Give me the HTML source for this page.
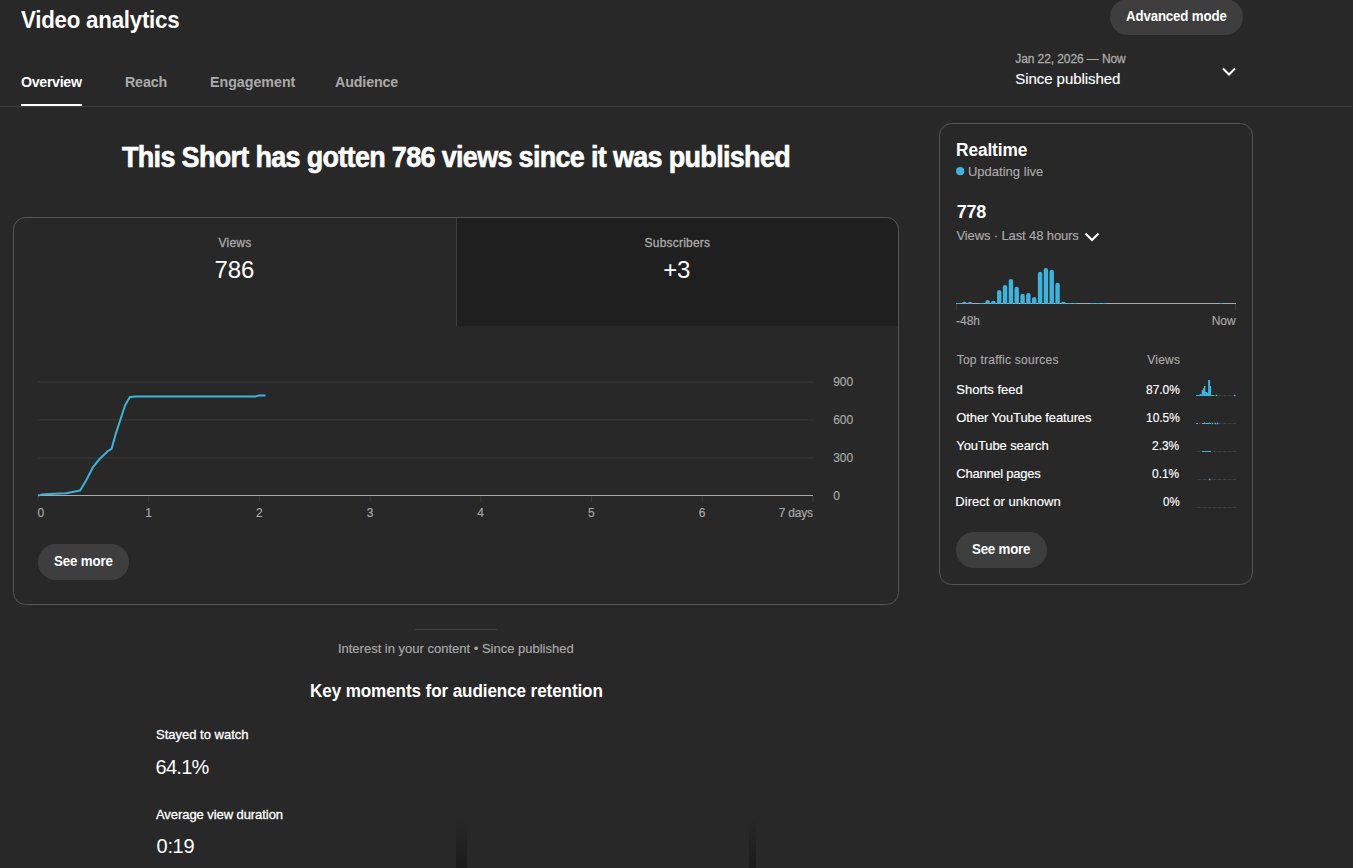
<!DOCTYPE html>
<html><head><meta charset="utf-8"><style>
html,body{margin:0;padding:0;background:#282828;width:1353px;height:868px;overflow:hidden;position:relative;font-family:"Liberation Sans",sans-serif;}
.t{position:absolute;white-space:nowrap;}
.abs{position:absolute;}
.btn{position:absolute;background:#3e3e3e;border-radius:18px;}
</style></head><body>
<div class="btn" style="left:1110px;top:-1px;width:133px;height:36px;"></div>
<div class="abs" style="left:21px;top:104px;width:61px;height:2px;background:#fff;"></div>
<div class="abs" style="left:0;top:106px;width:1353px;height:1px;background:#3e3e3e;"></div>
<svg class="abs" style="left:0;top:0" width="1353" height="868" viewBox="0 0 1353 868">
  <path d="M1223 68.5 L1229 74.5 L1235 68.5" fill="none" stroke="#fff" stroke-width="2"/>
  <path d="M457 218 H886 A12 12 0 0 1 898 230 V326 H457 Z" fill="#1f1f1f"/>
  <rect x="13.5" y="217.5" width="885" height="387" rx="12" fill="none" stroke="#555555" stroke-width="1"/>
  <rect x="456" y="218" width="1" height="108" fill="#3f3f3f"/>
  <rect x="38" y="381.4" width="775" height="1" fill="#3a3a3a"/>
  <rect x="38" y="419.4" width="775" height="1" fill="#3a3a3a"/>
  <rect x="38" y="457.4" width="775" height="1" fill="#3a3a3a"/>
  <rect x="37.50" y="496" width="1" height="6" fill="#3a3a3a"/><rect x="148.21" y="496" width="1" height="6" fill="#3a3a3a"/><rect x="258.93" y="496" width="1" height="6" fill="#3a3a3a"/><rect x="369.64" y="496" width="1" height="6" fill="#3a3a3a"/><rect x="480.36" y="496" width="1" height="6" fill="#3a3a3a"/><rect x="591.07" y="496" width="1" height="6" fill="#3a3a3a"/><rect x="701.78" y="496" width="1" height="6" fill="#3a3a3a"/><rect x="812.50" y="496" width="1" height="6" fill="#3a3a3a"/>
  <rect x="38" y="495" width="775" height="1" fill="#aaaaaa"/>
  <path d="M38,495.6 L42.1,494.4 L54.2,493.7 L66.3,493.3 L80.1,490.5 L86.1,480.5 L93.2,466.8 L99.6,459 L107.7,451.2 L111.6,448.8 L115.6,434.4 L125,405.5 L129.7,397.3 L134.8,396.4 L255.8,396.4 L259.3,395.4 L265.5,395.4" fill="none" stroke="#3fb3dc" stroke-width="2" stroke-linejoin="round"/>
  <rect x="939.5" y="123.5" width="313" height="461" rx="12" fill="#282828" stroke="#555555" stroke-width="1"/>
  <circle cx="960.2" cy="171.2" r="4.1" fill="#3fb3dc"/>
  <path d="M1085.5 233.5 L1092 240 L1098.5 233.5" fill="none" stroke="#fff" stroke-width="2"/>
  <rect x="956" y="303" width="280" height="1" fill="#aaaaaa"/>
  <rect x="956" y="304" width="1" height="6" fill="#3a3a3a"/>
  <rect x="1235" y="304" width="1" height="6" fill="#3a3a3a"/>
  <rect x="956.20" y="303" width="4.4" height="1" fill="#3fb3dc"/><path d="M962.03 304 V302.90 A2.2 1.10 0 0 1 966.43 302.90 V304 Z" fill="#3fb3dc"/><path d="M967.87 304 V303.00 A2.2 1.00 0 0 1 972.27 303.00 V304 Z" fill="#3fb3dc"/><rect x="979.53" y="303" width="4.4" height="1" fill="#3fb3dc"/><path d="M985.37 304 V301.95 A2.2 2.05 0 0 1 989.77 301.95 V304 Z" fill="#3fb3dc"/><path d="M991.20 304 V302.40 A2.2 1.60 0 0 1 995.60 302.40 V304 Z" fill="#3fb3dc"/><path d="M997.03 304 V292.20 A2.2 2.20 0 0 1 1001.43 292.20 V304 Z" fill="#3fb3dc"/><path d="M1002.87 304 V287.10 A2.2 2.20 0 0 1 1007.27 287.10 V304 Z" fill="#3fb3dc"/><path d="M1008.70 304 V281.10 A2.2 2.20 0 0 1 1013.10 281.10 V304 Z" fill="#3fb3dc"/><path d="M1014.53 304 V289.00 A2.2 2.20 0 0 1 1018.93 289.00 V304 Z" fill="#3fb3dc"/><path d="M1020.37 304 V296.00 A2.2 2.20 0 0 1 1024.77 296.00 V304 Z" fill="#3fb3dc"/><path d="M1026.20 304 V295.10 A2.2 2.20 0 0 1 1030.60 295.10 V304 Z" fill="#3fb3dc"/><path d="M1032.03 304 V299.10 A2.2 2.20 0 0 1 1036.43 299.10 V304 Z" fill="#3fb3dc"/><path d="M1037.87 304 V274.00 A2.2 2.20 0 0 1 1042.27 274.00 V304 Z" fill="#3fb3dc"/><path d="M1043.70 304 V270.20 A2.2 2.20 0 0 1 1048.10 270.20 V304 Z" fill="#3fb3dc"/><path d="M1049.53 304 V272.00 A2.2 2.20 0 0 1 1053.93 272.00 V304 Z" fill="#3fb3dc"/><path d="M1055.37 304 V285.00 A2.2 2.20 0 0 1 1059.77 285.00 V304 Z" fill="#3fb3dc"/><path d="M1061.20 304 V302.90 A2.2 1.10 0 0 1 1065.60 302.90 V304 Z" fill="#3fb3dc"/><rect x="1067.03" y="303" width="4.4" height="1" fill="#3fb3dc"/><rect x="1072.87" y="303" width="4.4" height="1" fill="#3fb3dc"/><rect x="1090.37" y="303" width="4.4" height="1" fill="#3fb3dc"/><rect x="1096.20" y="303" width="4.4" height="1" fill="#3fb3dc"/><rect x="1102.03" y="303" width="4.4" height="1" fill="#3fb3dc"/><rect x="1218.70" y="303" width="4.4" height="1" fill="#3fb3dc"/>
  <rect x="1196" y="395" width="40" height="1" fill="#333333"/><rect x="1198.8" y="395" width="1.5" height="1" fill="#4a4a4a"/><rect x="1203.8" y="395" width="1.5" height="1" fill="#4a4a4a"/><rect x="1208.8" y="395" width="1.5" height="1" fill="#4a4a4a"/><rect x="1213.8" y="395" width="1.5" height="1" fill="#4a4a4a"/><rect x="1218.8" y="395" width="1.5" height="1" fill="#4a4a4a"/><rect x="1223.8" y="395" width="1.5" height="1" fill="#4a4a4a"/><rect x="1228.8" y="395" width="1.5" height="1" fill="#4a4a4a"/><rect x="1233.8" y="395" width="1.5" height="1" fill="#4a4a4a"/><rect x="1196" y="395" width="18.200000000000045" height="1" fill="#3fb3dc"/><rect x="1215.8" y="394.7" width="1.5" height="1.5" fill="#3fb3dc"/><rect x="1233.8999999999999" y="394.7" width="1.5" height="1.5" fill="#3fb3dc"/><polygon points="1196,396 1199.7,396 1199.7,394 1201.3,394 1201.3,396 1201.6,396 1201.6,390.3 1202.9,390.3 1202.9,388.3 1204,388.3 1204,386 1205.4,386 1205.4,392 1207.2,392 1207.2,393.1 1208.1,393.1 1208.1,380 1210.1,380 1210.1,386 1211.1,386 1211.1,396" fill="#3fb3dc"/><rect x="1196" y="423" width="40" height="1" fill="#333333"/><rect x="1198.8" y="423" width="1.5" height="1" fill="#4a4a4a"/><rect x="1203.8" y="423" width="1.5" height="1" fill="#4a4a4a"/><rect x="1208.8" y="423" width="1.5" height="1" fill="#4a4a4a"/><rect x="1213.8" y="423" width="1.5" height="1" fill="#4a4a4a"/><rect x="1218.8" y="423" width="1.5" height="1" fill="#4a4a4a"/><rect x="1223.8" y="423" width="1.5" height="1" fill="#4a4a4a"/><rect x="1228.8" y="423" width="1.5" height="1" fill="#4a4a4a"/><rect x="1233.8" y="423" width="1.5" height="1" fill="#4a4a4a"/><rect x="1196" y="423" width="2" height="1" fill="#3fb3dc"/><rect x="1202" y="423" width="9" height="1" fill="#3fb3dc"/><rect x="1211.8" y="422.7" width="1.5" height="1.5" fill="#3fb3dc"/><rect x="1214.8" y="422.7" width="1.5" height="1.5" fill="#3fb3dc"/><rect x="1216.8" y="422.7" width="1.5" height="1.5" fill="#3fb3dc"/><polygon points="1203.8,423 1204.4,421.8 1205,423 1208.8,423 1209.4,421.8 1210,423" fill="#3fb3dc"/><rect x="1196" y="451" width="40" height="1" fill="#333333"/><rect x="1198.8" y="451" width="1.5" height="1" fill="#4a4a4a"/><rect x="1203.8" y="451" width="1.5" height="1" fill="#4a4a4a"/><rect x="1208.8" y="451" width="1.5" height="1" fill="#4a4a4a"/><rect x="1213.8" y="451" width="1.5" height="1" fill="#4a4a4a"/><rect x="1218.8" y="451" width="1.5" height="1" fill="#4a4a4a"/><rect x="1223.8" y="451" width="1.5" height="1" fill="#4a4a4a"/><rect x="1228.8" y="451" width="1.5" height="1" fill="#4a4a4a"/><rect x="1233.8" y="451" width="1.5" height="1" fill="#4a4a4a"/><rect x="1202" y="451" width="9" height="1" fill="#3fb3dc"/><rect x="1196" y="479" width="40" height="1" fill="#333333"/><rect x="1198.8" y="479" width="1.5" height="1" fill="#4a4a4a"/><rect x="1203.8" y="479" width="1.5" height="1" fill="#4a4a4a"/><rect x="1208.8" y="479" width="1.5" height="1" fill="#4a4a4a"/><rect x="1213.8" y="479" width="1.5" height="1" fill="#4a4a4a"/><rect x="1218.8" y="479" width="1.5" height="1" fill="#4a4a4a"/><rect x="1223.8" y="479" width="1.5" height="1" fill="#4a4a4a"/><rect x="1228.8" y="479" width="1.5" height="1" fill="#4a4a4a"/><rect x="1233.8" y="479" width="1.5" height="1" fill="#4a4a4a"/><rect x="1208.8999999999999" y="478.7" width="1.5" height="1.5" fill="#3fb3dc"/><rect x="1196" y="507" width="40" height="1" fill="#333333"/><rect x="1198.8" y="507" width="1.5" height="1" fill="#4a4a4a"/><rect x="1203.8" y="507" width="1.5" height="1" fill="#4a4a4a"/><rect x="1208.8" y="507" width="1.5" height="1" fill="#4a4a4a"/><rect x="1213.8" y="507" width="1.5" height="1" fill="#4a4a4a"/><rect x="1218.8" y="507" width="1.5" height="1" fill="#4a4a4a"/><rect x="1223.8" y="507" width="1.5" height="1" fill="#4a4a4a"/><rect x="1228.8" y="507" width="1.5" height="1" fill="#4a4a4a"/><rect x="1233.8" y="507" width="1.5" height="1" fill="#4a4a4a"/>
  <rect x="415" y="629" width="82" height="1" fill="#3f3f3f"/>
  <defs><linearGradient id="g1" x1="0" y1="0" x2="0" y2="1"><stop offset="0" stop-color="#282828"/><stop offset="1" stop-color="#1b1b1b"/></linearGradient></defs>
  <rect x="456" y="816" width="11" height="52" fill="url(#g1)"/>
  <rect x="749" y="816" width="7" height="52" fill="url(#g1)"/>
</svg>
<div class="btn" style="left:38px;top:544px;width:91px;height:36px;"></div>
<div class="btn" style="left:956px;top:532px;width:91px;height:36px;"></div>
<div class="t" style="left:21.30px;top:8px;font-size:24px;line-height:24px;color:#ffffff;font-weight:bold;letter-spacing:-0.267px;transform:scaleX(0.93);transform-origin:0 0;">Video analytics</div>
<div class="t" style="left:21.10px;top:74px;font-size:15px;line-height:15px;color:#ffffff;font-weight:bold;letter-spacing:-0.359px;transform:scaleX(0.95);transform-origin:0 0;">Overview</div>
<div class="t" style="left:125.05px;top:74px;font-size:15px;line-height:15px;color:#aaaaaa;font-weight:bold;letter-spacing:-0.175px;transform:scaleX(0.95);transform-origin:0 0;">Reach</div>
<div class="t" style="left:209.65px;top:74px;font-size:15px;line-height:15px;color:#aaaaaa;font-weight:bold;letter-spacing:-0.020px;transform:scaleX(0.95);transform-origin:0 0;">Engagement</div>
<div class="t" style="left:335.00px;top:74px;font-size:15px;line-height:15px;color:#aaaaaa;font-weight:bold;letter-spacing:-0.137px;transform:scaleX(0.95);transform-origin:0 0;">Audience</div>
<div class="t" style="left:1126.00px;top:9px;font-size:14px;line-height:14px;color:#ffffff;font-weight:bold;letter-spacing:-0.170px;transform:scaleX(0.95);transform-origin:0 0;">Advanced mode</div>
<div class="t" style="left:1015.30px;top:53px;font-size:12px;line-height:12px;color:#aaaaaa;-webkit-text-stroke:0.3px #aaaaaa;letter-spacing:-0.094px;">Jan 22, 2026 — Now</div>
<div class="t" style="left:1015.30px;top:71px;font-size:15px;line-height:15px;color:#ffffff;-webkit-text-stroke:0.15px #ffffff;letter-spacing:-0.062px;">Since published</div>
<div class="t" style="left:122.40px;top:143px;font-size:29px;line-height:29px;color:#ffffff;font-weight:bold;-webkit-text-stroke:0.6px #ffffff;letter-spacing:-0.724px;transform:scaleX(0.93);transform-origin:0 0;">This Short has gotten 786 views since it was published</div>
<div class="t" style="left:218.40px;top:237px;font-size:12px;line-height:12px;color:#aaaaaa;-webkit-text-stroke:0.3px #aaaaaa;letter-spacing:0.277px;">Views</div>
<div class="t" style="left:214.40px;top:258px;font-size:24px;line-height:24px;color:#ffffff;letter-spacing:-0.048px;">786</div>
<div class="t" style="left:644.60px;top:237px;font-size:12px;line-height:12px;color:#aaaaaa;-webkit-text-stroke:0.3px #aaaaaa;letter-spacing:0.204px;">Subscribers</div>
<div class="t" style="left:663.30px;top:258px;font-size:24px;line-height:24px;color:#ffffff;letter-spacing:-0.416px;">+3</div>
<div class="t" style="left:833.20px;top:376px;font-size:12px;line-height:12px;color:#aaaaaa;-webkit-text-stroke:0.15px #aaaaaa;">900</div>
<div class="t" style="left:833.20px;top:414px;font-size:12px;line-height:12px;color:#aaaaaa;-webkit-text-stroke:0.15px #aaaaaa;">600</div>
<div class="t" style="left:833.20px;top:452px;font-size:12px;line-height:12px;color:#aaaaaa;-webkit-text-stroke:0.15px #aaaaaa;">300</div>
<div class="t" style="left:833.20px;top:490px;font-size:12px;line-height:12px;color:#aaaaaa;-webkit-text-stroke:0.15px #aaaaaa;">0</div>
<div class="t" style="left:37.50px;top:507px;font-size:12px;line-height:12px;color:#aaaaaa;-webkit-text-stroke:0.15px #aaaaaa;">0</div>
<div class="t" style="left:145.21px;top:507px;font-size:12px;line-height:12px;color:#aaaaaa;-webkit-text-stroke:0.15px #aaaaaa;">1</div>
<div class="t" style="left:255.93px;top:507px;font-size:12px;line-height:12px;color:#aaaaaa;-webkit-text-stroke:0.15px #aaaaaa;">2</div>
<div class="t" style="left:366.64px;top:507px;font-size:12px;line-height:12px;color:#aaaaaa;-webkit-text-stroke:0.15px #aaaaaa;">3</div>
<div class="t" style="left:477.36px;top:507px;font-size:12px;line-height:12px;color:#aaaaaa;-webkit-text-stroke:0.15px #aaaaaa;">4</div>
<div class="t" style="left:588.07px;top:507px;font-size:12px;line-height:12px;color:#aaaaaa;-webkit-text-stroke:0.15px #aaaaaa;">5</div>
<div class="t" style="left:698.78px;top:507px;font-size:12px;line-height:12px;color:#aaaaaa;-webkit-text-stroke:0.15px #aaaaaa;">6</div>
<div class="t" style="left:778.70px;top:507px;font-size:12px;line-height:12px;color:#aaaaaa;-webkit-text-stroke:0.15px #aaaaaa;letter-spacing:-0.211px;">7 days</div>
<div class="t" style="left:54.00px;top:554px;font-size:14px;line-height:14px;color:#ffffff;font-weight:bold;letter-spacing:-0.148px;transform:scaleX(0.95);transform-origin:0 0;">See more</div>
<div class="t" style="left:955.84px;top:141px;font-size:18px;line-height:18px;color:#ffffff;font-weight:bold;letter-spacing:-0.098px;transform:scaleX(0.96);transform-origin:0 0;">Realtime</div>
<div class="t" style="left:967.90px;top:165px;font-size:13px;line-height:13px;color:#aaaaaa;-webkit-text-stroke:0.15px #aaaaaa;letter-spacing:0.023px;">Updating live</div>
<div class="t" style="left:956.80px;top:203px;font-size:18px;line-height:18px;color:#ffffff;font-weight:bold;letter-spacing:-0.261px;">778</div>
<div class="t" style="left:956.50px;top:229px;font-size:13px;line-height:13px;color:#aaaaaa;-webkit-text-stroke:0.15px #aaaaaa;letter-spacing:-0.123px;">Views · Last 48 hours</div>
<div class="t" style="left:956.00px;top:315px;font-size:12px;line-height:12px;color:#aaaaaa;-webkit-text-stroke:0.15px #aaaaaa;">-48h</div>
<div class="t" style="left:1211.70px;top:315px;font-size:12px;line-height:12px;color:#aaaaaa;-webkit-text-stroke:0.15px #aaaaaa;letter-spacing:-0.020px;">Now</div>
<div class="t" style="left:956.70px;top:354px;font-size:12px;line-height:12px;color:#aaaaaa;-webkit-text-stroke:0.15px #aaaaaa;letter-spacing:0.253px;">Top traffic sources</div>
<div class="t" style="left:1147.30px;top:354px;font-size:12px;line-height:12px;color:#aaaaaa;-webkit-text-stroke:0.15px #aaaaaa;letter-spacing:0.227px;">Views</div>
<div class="t" style="left:956.30px;top:383px;font-size:13px;line-height:13px;color:#ffffff;-webkit-text-stroke:0.15px #ffffff;">Shorts feed</div>
<div class="t" style="left:1145.70px;top:383px;font-size:13px;line-height:13px;color:#ffffff;-webkit-text-stroke:0.15px #ffffff;transform:scaleX(0.9195277116003874);transform-origin:0 0;">87.0%</div>
<div class="t" style="left:956.30px;top:411px;font-size:13px;line-height:13px;color:#ffffff;-webkit-text-stroke:0.15px #ffffff;letter-spacing:-0.114px;">Other YouTube features</div>
<div class="t" style="left:1145.70px;top:411px;font-size:13px;line-height:13px;color:#ffffff;-webkit-text-stroke:0.15px #ffffff;transform:scaleX(0.9195277116003874);transform-origin:0 0;">10.5%</div>
<div class="t" style="left:956.30px;top:439px;font-size:13px;line-height:13px;color:#ffffff;-webkit-text-stroke:0.15px #ffffff;letter-spacing:-0.099px;">YouTube search</div>
<div class="t" style="left:1152.40px;top:439px;font-size:13px;line-height:13px;color:#ffffff;-webkit-text-stroke:0.15px #ffffff;transform:scaleX(0.9178040820302986);transform-origin:0 0;">2.3%</div>
<div class="t" style="left:956.30px;top:467px;font-size:13px;line-height:13px;color:#ffffff;-webkit-text-stroke:0.15px #ffffff;letter-spacing:-0.247px;">Channel pages</div>
<div class="t" style="left:1152.40px;top:467px;font-size:13px;line-height:13px;color:#ffffff;-webkit-text-stroke:0.15px #ffffff;transform:scaleX(0.9178040820302986);transform-origin:0 0;">0.1%</div>
<div class="t" style="left:955.30px;top:495px;font-size:13px;line-height:13px;color:#ffffff;-webkit-text-stroke:0.15px #ffffff;letter-spacing:0.041px;">Direct or unknown</div>
<div class="t" style="left:1163.00px;top:495px;font-size:13px;line-height:13px;color:#ffffff;-webkit-text-stroke:0.15px #ffffff;transform:scaleX(0.8840362592996979);transform-origin:0 0;">0%</div>
<div class="t" style="left:972.30px;top:542px;font-size:14px;line-height:14px;color:#ffffff;font-weight:bold;letter-spacing:-0.208px;transform:scaleX(0.95);transform-origin:0 0;">See more</div>
<div class="t" style="left:337.90px;top:642px;font-size:13px;line-height:13px;color:#aaaaaa;-webkit-text-stroke:0.15px #aaaaaa;">Interest in your content • Since published</div>
<div class="t" style="left:309.65px;top:682px;font-size:18px;line-height:18px;color:#ffffff;font-weight:bold;letter-spacing:-0.114px;transform:scaleX(0.95);transform-origin:0 0;">Key moments for audience retention</div>
<div class="t" style="left:156.00px;top:728px;font-size:13px;line-height:13px;color:#ffffff;-webkit-text-stroke:0.3px #ffffff;">Stayed to watch</div>
<div class="t" style="left:155.60px;top:757px;font-size:20px;line-height:20px;color:#ffffff;letter-spacing:-0.756px;">64.1%</div>
<div class="t" style="left:156.00px;top:808px;font-size:13px;line-height:13px;color:#ffffff;-webkit-text-stroke:0.3px #ffffff;letter-spacing:-0.068px;">Average view duration</div>
<div class="t" style="left:156.60px;top:836px;font-size:20px;line-height:20px;color:#ffffff;letter-spacing:-0.334px;">0:19</div>
</body></html>
